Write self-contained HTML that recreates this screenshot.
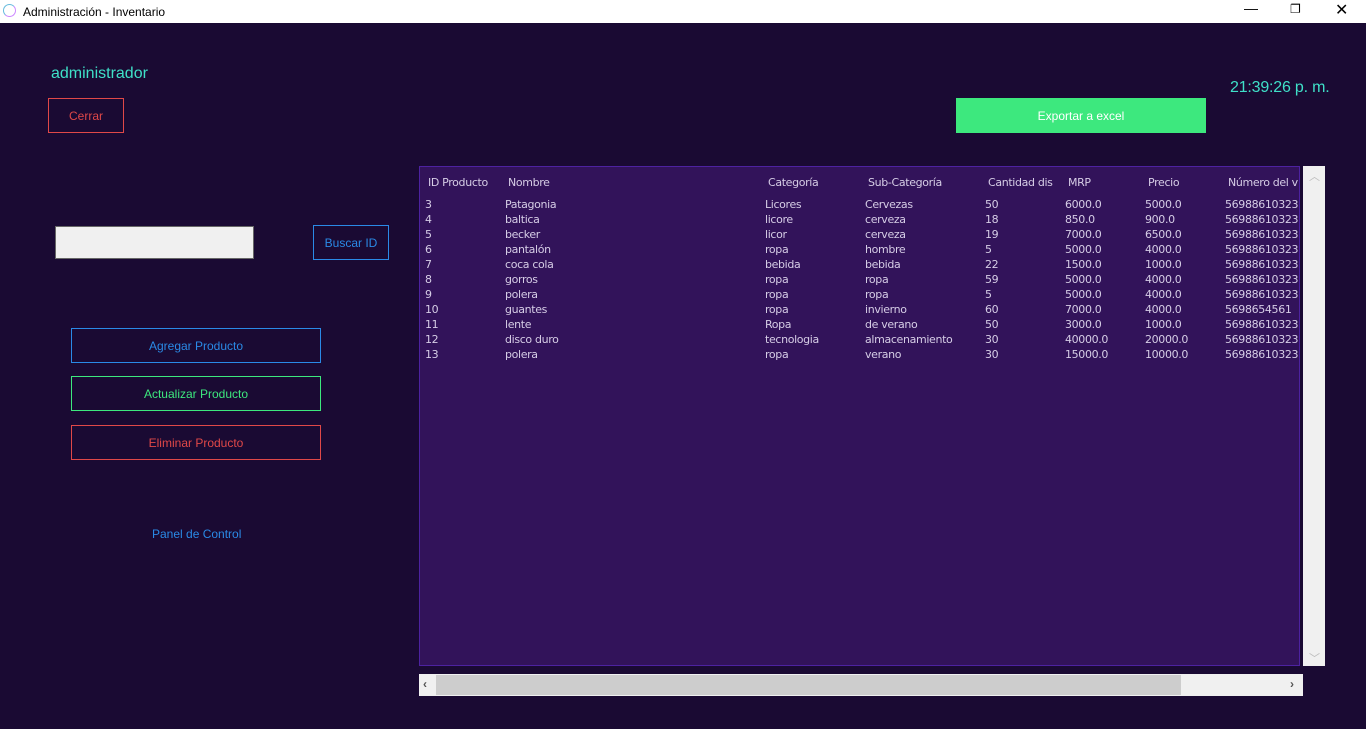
<!DOCTYPE html><html><head><meta charset="utf-8"><style>
body{margin:0;width:1366px;height:729px;background:#1a0a33;font-family:"Liberation Sans",sans-serif;position:relative;overflow:hidden}
.a{position:absolute}
.tb{top:0;left:0;width:1366px;height:23px;background:#fff;color:#000;font-size:12px}
.btn{position:absolute;box-sizing:border-box;border:1px solid;display:flex;align-items:center;justify-content:center;font-size:12px}
.t{font-family:"DejaVu Sans","Liberation Sans",sans-serif;font-size:11px;color:#d6cde6;white-space:nowrap;letter-spacing:-0.35px}
</style></head><body>
<div class="a tb"><div class="a" style="left:3px;top:4px;width:13px;height:13px;border:1.5px solid #6bd;border-radius:50%;box-sizing:border-box;border-right-color:#c8f;border-bottom-color:#c8f"></div><span class="a" style="left:23px;top:5px">Administración - Inventario</span>
<span class="a" style="left:1244px;top:0px;font-size:14px">—</span><span class="a" style="left:1290px;top:2px;font-size:12px">❐</span><span class="a" style="left:1335px;top:0px;font-size:16px">✕</span></div>
<div class="a" style="left:51px;top:65px;color:#3fe0c8;font-size:16px">administrador</div>
<div class="a" style="left:1230px;top:79px;color:#3fe0c8;font-size:16px;letter-spacing:-0.2px">21:39:26 p. m.</div>
<div class="btn" style="left:48px;top:98px;width:76px;height:35px;border-color:#e04848;color:#e04848">Cerrar</div>
<div class="btn" style="left:956px;top:98px;width:250px;height:35px;border:none;background:#3de87e;color:#fff">Exportar a excel</div>
<div class="a" style="left:55px;top:226px;width:199px;height:33px;background:#f0f0f0;border:1px solid #666;box-sizing:border-box"></div>
<div class="btn" style="left:313px;top:225px;width:76px;height:35px;border-color:#2a8ae6;color:#2a8ae6">Buscar ID</div>
<div class="btn" style="left:71px;top:328px;width:250px;height:35px;border-color:#2a8ae6;color:#2a8ae6">Agregar Producto</div>
<div class="btn" style="left:71px;top:376px;width:250px;height:35px;border-color:#3de87e;color:#3de87e">Actualizar Producto</div>
<div class="btn" style="left:71px;top:425px;width:250px;height:35px;border-color:#e04848;color:#e04848">Eliminar Producto</div>
<div class="a" style="left:152px;top:527px;color:#2a8ae6;font-size:12px">Panel de Control</div>
<div class="a" style="left:419px;top:166px;width:881px;height:500px;background:#32135a;border:1px solid #4d22a0;box-sizing:border-box;overflow:hidden">
<div id="h"></div></div>
<div class="a" style="left:1303px;top:166px;width:22px;height:500px;background:#f0f0f0"><span class="a" style="left:6px;top:2px;color:#bbb;font-size:11px">︿</span><span class="a" style="left:6px;top:484px;color:#bbb;font-size:11px">﹀</span></div>
<div class="a" style="left:419px;top:674px;width:884px;height:22px;background:#f0f0f0"><div class="a" style="left:17px;top:1px;width:745px;height:20px;background:#cdcdcd"></div><span class="a" style="left:4px;top:3px;color:#555;font-size:12px;font-weight:bold">‹</span><span class="a" style="left:871px;top:3px;color:#555;font-size:12px;font-weight:bold">›</span></div>
<script>
var cx=[5,85,345,445,565,645,725,805];
var hd=["ID Producto","Nombre","Categoría","Sub-Categoría","Cantidad dis","MRP","Precio","Número del v"];
var rows=[["3","Patagonia","Licores","Cervezas","50","6000.0","5000.0","56988610323"],["4","baltica","licore","cerveza","18","850.0","900.0","56988610323"],["5","becker","licor","cerveza","19","7000.0","6500.0","56988610323"],["6","pantalón","ropa","hombre","5","5000.0","4000.0","56988610323"],["7","coca cola","bebida","bebida","22","1500.0","1000.0","56988610323"],["8","gorros","ropa","ropa","59","5000.0","4000.0","56988610323"],["9","polera","ropa","ropa","5","5000.0","4000.0","56988610323"],["10","guantes","ropa","invierno","60","7000.0","4000.0","5698654561"],["11","lente","Ropa","de verano","50","3000.0","1000.0","56988610323"],["12","disco duro","tecnologia","almacenamiento","30","40000.0","20000.0","56988610323"],["13","polera","ropa","verano","30","15000.0","10000.0","56988610323"]];
var s="";hd.forEach(function(h,i){s+='<span class="a t" style="left:'+(cx[i]+3)+'px;top:9px">'+h+'</span>'});
rows.forEach(function(r,j){r.forEach(function(c,i){s+='<span class="a t" style="left:'+cx[i]+'px;top:'+(31+15*j)+'px">'+c+'</span>'})});
document.getElementById('h').innerHTML=s;
</script>
</body></html>
